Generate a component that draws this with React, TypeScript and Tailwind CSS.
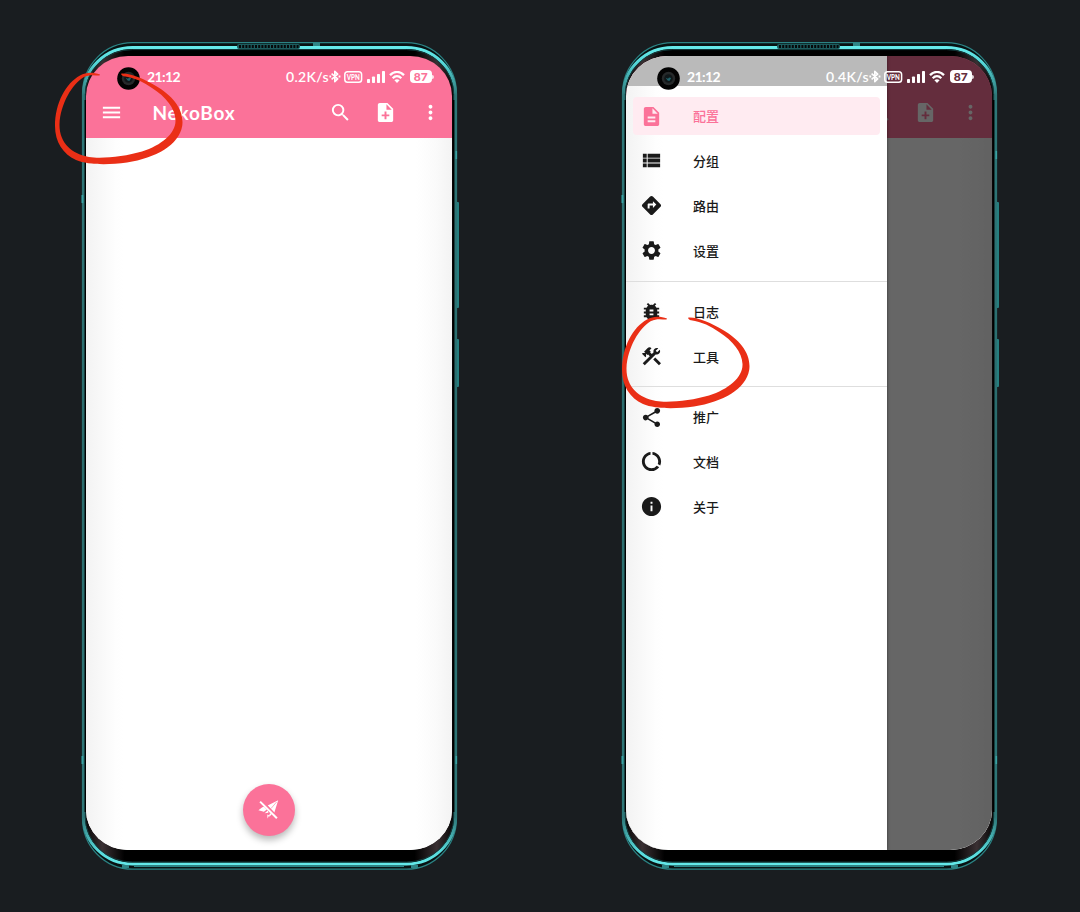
import type { ReactNode } from "react";
import {
  MdBugReport,
  MdConstruction,
  MdDataUsage,
  MdDescription,
  MdDirections,
  MdInfo,
  MdMenu,
  MdMoreVert,
  MdNoteAdd,
  MdSearch,
  MdSettings,
  MdShare,
  MdViewList,
} from "react-icons/md";

function PhoneFrame({ id }: { id: string }) {
  const metal = `metal-${id}`;
  const glare = `glare-${id}`;
  return (
    <svg className="absolute inset-0" width="540" height="912" viewBox="0 0 540 912" fill="none">
      <defs>
        <linearGradient id={metal} gradientUnits="userSpaceOnUse" x1="0" y1="46" x2="0" y2="867">
          <stop offset="0" stopColor="#66ecec" />
          <stop offset="0.02" stopColor="#55d8da" />
          <stop offset="0.06" stopColor="#2f7778" />
          <stop offset="0.5" stopColor="#2a6a6b" />
          <stop offset="0.94" stopColor="#2f7778" />
          <stop offset="0.98" stopColor="#55d8da" />
          <stop offset="1" stopColor="#66ecec" />
        </linearGradient>
        <linearGradient id={glare} x1="0" y1="0" x2="1" y2="0">
          <stop offset="0" stopColor="#000" />
          <stop offset="0.05" stopColor="#3a3033" />
          <stop offset="0.11" stopColor="#000" />
          <stop offset="0.89" stopColor="#000" />
          <stop offset="0.95" stopColor="#3a3033" />
          <stop offset="1" stopColor="#000" />
        </linearGradient>
      </defs>
      <rect x="456" y="202" width="3" height="106" rx="1" fill="#257f80" />
      <rect x="456" y="339" width="3" height="48" rx="1" fill="#257f80" />
      <rect x="82.5" y="42.7" width="374" height="826.5" rx="50" ry="51" fill="#081213" stroke="#2b8384" strokeWidth="1.2" />
      <rect x="83.6" y="47.6" width="371.8" height="816.4" rx="49" ry="47" fill={`url(#${glare})`} stroke={`url(#${metal})`} strokeWidth="3" />
      <rect x="85.3" y="49.6" width="368.4" height="812.4" rx="47" ry="45" stroke="#123c3d" strokeWidth="1" />
      <path d="M85.4 100V812M453.6 100V812" stroke="#000" strokeWidth="1.6" />
      <path d="M134 866.3H404" stroke="#2a8586" strokeWidth="1.2" />
      <rect x="237" y="44" width="63" height="5" rx="2" fill="#1d5c5e" />
      <path d="M239 46.5H299" stroke="#05090a" strokeWidth="3" strokeDasharray="2 1.2" />
      <path d="M313 43h7v3h-7zM122 865h7v3h-7zM411 865h7v3h-7z" fill="#2f8586" />
      <path d="M81.5 195h1.8v8h-1.8zM81.5 756h1.8v8h-1.8zM455.5 151h1.6v8h-1.6zM455.5 756h1.6v8h-1.6z" fill="#38a3a4" />
    </svg>
  );
}

function Camera() {
  return (
    <svg className="absolute left-[31px] top-[11px]" width="23" height="23" viewBox="0 0 23 23">
      <circle cx="11.5" cy="11.5" r="11.3" fill="#030303" />
      <circle cx="11.5" cy="11.5" r="6.7" fill="#26292a" />
      <circle cx="11.5" cy="11.5" r="4.3" fill="#101719" />
      <path d="M8.7 10.8l2.3 1 1-1.4 2.2.7-1.8 2.8-1.8-.4z" fill="#20626a" />
    </svg>
  );
}

function StatusBar({ speed, digits }: { speed: string; digits: string }) {
  return (
    <div className="absolute inset-x-0 top-0 h-[41px] font-[Lato,sans-serif] text-white">
      <Camera />
      <div className="flex h-[41px] items-center pl-[61px] pr-[18.5px]">
        <span className="text-[14px] font-bold leading-none tracking-[-0.6px]">21:12</span>
        <span className="ml-auto text-[14px] font-semibold leading-none tracking-[0.35px]">{speed}</span>
        <svg className="-ml-[0.5px]" width="12" height="13" viewBox="0 0 12 13" fill="none" stroke="white" strokeWidth="1.6" strokeLinejoin="round">
          <path d="M2.6 3.7L8.7 8.9L5.8 11.6V1.4L8.7 4.1L2.6 9.3" />
          <path d="M0.4 6.500H2.200M9.600 6.500H11.400" strokeWidth="1.9" />
        </svg>
        <svg className="ml-[3.5px]" width="19" height="12" viewBox="0 0 19 12" fill="none">
          <rect x="0.8" y="0.8" width="16.8" height="10.4" rx="2.8" stroke="white" strokeWidth="1.5" />
          <text x="9.2" y="8.7" fill="white" fontSize="7.600" fontWeight="900" textAnchor="middle" textLength="13" lengthAdjust="spacingAndGlyphs">VPN</text>
        </svg>
        <svg className="ml-[3.5px]" width="18" height="12" viewBox="0 0 18 12" fill="white">
          <rect x="0" y="8" width="3" height="4" rx="0.8" />
          <rect x="5" y="5.5" width="3" height="6.5" rx="0.8" />
          <rect x="10" y="3" width="3" height="9" rx="0.8" />
          <rect x="15" y="0" width="3" height="12" rx="0.8" />
        </svg>
        <svg className="ml-[4.5px]" width="16" height="12" viewBox="0 0 16 12" fill="none" stroke="white">
          <path d="M1 4.1C5-.1 11-.1 15 4.1" strokeWidth="2.3" />
          <path d="M3.7 7.2c2.6-2.6 6-2.6 8.6 0" strokeWidth="2.3" />
          <path d="M8 11.9L5.4 9.2C7 7.9 9 7.9 10.6 9.2Z" fill="white" stroke="none" />
        </svg>
        <span className="ml-[4.5px] flex h-[12.5px] w-[22.5px] items-center justify-center rounded-[4px] bg-white">
          <span className={`text-[12px] font-black leading-none ${digits}`}>87</span>
        </span>
        <span className="h-1 w-[1.5px] rounded-r bg-white/80" />
      </div>
    </div>
  );
}

function AppBar({ title }: { title?: string }) {
  return (
    <header className="flex h-[82px] shrink-0 items-end bg-[#fb7299] pb-[14px] pl-[14px] text-white shadow-[0_1px_2px_rgba(0,0,0,0.2)]">
      <MdMenu className="size-[23px]" />
      {title && (
        <h1 className="ml-[29.5px] font-[Lato,sans-serif] text-[19px] font-bold leading-[23px] tracking-[0.75px]">{title}</h1>
      )}
      <div className="ml-auto flex pr-[10.4px]">
        <MdSearch className="size-[23px]" />
        <MdNoteAdd className="ml-[22px] size-[23px]" />
        <MdMoreVert className="ml-[22px] size-[23px]" />
      </div>
    </header>
  );
}

type PhoneProps = {
  id: string;
  title?: string;
  speed: string;
  digits: string;
  children?: ReactNode;
  drawer?: ReactNode;
};

function Phone({ id, title, speed, digits, children, drawer }: PhoneProps) {
  return (
    <section className="relative h-[912px] w-[540px] pl-[86px] pt-[56px]">
      <PhoneFrame id={id} />
      <div className="relative flex h-[794px] w-[366px] flex-col overflow-hidden rounded-[42px/40px]">
        <AppBar title={title} />
        <main className="flex grow flex-col items-center justify-end bg-white bg-[linear-gradient(90deg,#f3f3f3_0,#f8f8f8_14px,#fefefe_30px,#fff_38px,#fff_330px,#fafafa_350px,#f3f3f3_366px)] pb-[14.5px]">
          {children}
        </main>
        {drawer}
        <StatusBar speed={speed} digits={digits} />
      </div>
    </section>
  );
}

function ConnectButton() {
  return (
    <button className="flex size-[52px] items-center justify-center rounded-full bg-[#fb7299] shadow-[0_4px_7px_rgba(0,0,0,0.28)]">
      <svg width="22" height="22" viewBox="0 0 22 22" fill="white">
        <path d="M20.2 1.2L9.700 6.500l6.600 7.200z" />
        <path d="M4.300 8.300L.4 11.300l5.500 1.500 3.300-2.600-2.600-2.700zM10 11.200l-3.300 3 3.700-.4zM12.600 13.400l-3 5.500 4.400-3.600zM9.300 15.600l2.300 1-2.200 2.900z" />
        <path d="M2.500 1.800L19.800 19.400" stroke="#fb7299" strokeWidth="3.4" />
        <path d="M2.100 2.600L18.900 19.200" stroke="white" strokeWidth="2" />
        <path d="M18.600 3L13 9.500" stroke="#fb7299" strokeWidth="0.6" />
      </svg>
    </button>
  );
}

type Item = { label: string; icon: typeof MdInfo; active?: boolean };

const groups: Item[][] = [
  [
    { label: "配置", icon: MdDescription, active: true },
    { label: "分组", icon: MdViewList },
    { label: "路由", icon: MdDirections },
    { label: "设置", icon: MdSettings },
  ],
  [
    { label: "日志", icon: MdBugReport },
    { label: "工具", icon: MdConstruction },
  ],
  [
    { label: "推广", icon: MdShare },
    { label: "文档", icon: MdDataUsage },
    { label: "关于", icon: MdInfo },
  ],
];

function Drawer() {
  return (
    <div className="absolute inset-0 bg-black/60">
      <nav className="h-full w-[261px] bg-[linear-gradient(90deg,#f3f3f3_0,#f8f8f8_14px,#fefefe_30px,#fff_38px)] shadow-[0_0_3px_rgba(0,0,0,0.5)]">
        <div className="h-[30px] bg-[#bababa]" />
        <div className="pt-[11px]">
          {groups.map((items, index) => (
            <ul
              key={index}
              className={
                index === 0
                  ? "flex flex-col gap-[6.9px] px-[7px] pb-[11px]"
                  : "flex flex-col gap-[6.9px] border-t border-[#dedede] px-[7px] pb-[10.5px] pt-[11px]"
              }
            >
              {items.map(({ label, icon: Icon, active }) => (
                <li
                  key={label}
                  className={
                    active
                      ? "flex h-[38px] items-center rounded bg-[#ffebf1] pl-[7px] text-[#fb7299]"
                      : "flex h-[38px] items-center pl-[7px] text-[#1a1a1a]"
                  }
                >
                  <Icon className="size-[23px]" />
                  <span className="ml-[30px] pb-px font-['Noto_Sans_CJK_SC',sans-serif] text-[13px] font-medium leading-none">{label}</span>
                </li>
              ))}
            </ul>
          ))}
        </div>
      </nav>
    </div>
  );
}

function Marker({ className }: { className: string }) {
  return (
    <svg className={className} width="130" height="94" viewBox="0 0 130 94">
      <path
        d="M46 2.5C39 0 32 0 26 3.5C12 11 1 31 1 54C1 70 9 82 22 88C34 93 54 93 73 90.500C102 86 125 73 128.200 54C130.500 38 119 24 102 14C90 7 77 1 67.500 1.500C66.500 2 68 4 70 4.200C81 6 90 10 98 16C112 25 121 36 121.500 48C122 61 108 73 88 79.500C71 84.500 48 87 35 85C18 82 5 71 5.500 52C6.500 32 18 12 30 5C36 2 41 3.500 45.500 3.500Z"
        fill="#ea2f16"
      />
    </svg>
  );
}

export default function App() {
  return (
    <div className="flex h-[912px] w-[1080px] overflow-hidden bg-[#191d20]">
      <div className="relative">
        <Phone id="home" title="NekoBox" speed="0.2K/s" digits="text-[#fb7299]">
          <ConnectButton />
        </Phone>
        <Marker className="absolute left-[54px] top-[71.5px]" />
      </div>
      <div className="relative">
        <Phone id="menu" speed="0.4K/s" digits="text-[#642d3d]" drawer={<Drawer />} />
        <Marker className="absolute left-[81px] top-[315.5px]" />
      </div>
    </div>
  );
}
